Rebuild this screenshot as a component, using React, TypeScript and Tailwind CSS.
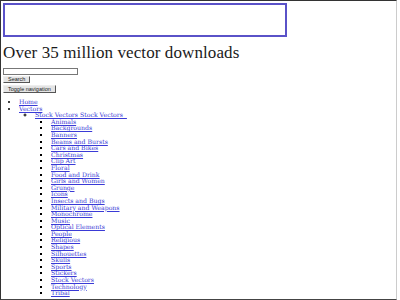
import React from "react";

const cats = [
  "Animals","Backgrounds","Banners","Beams and Bursts","Cars and Bikes","Christmas","Clip Art","Floral","Food and Drink","Girls and Women","Grunge","Icons","Insects and Bugs","Military and Weapons","Monochrome","Music","Optical Elements","People","Religious","Shapes","Silhouettes","Skulls","Sports","Stickers","Stock Vectors","Technology","Tribal",
];

const link = "text-[#3a3ad6] underline";

export default function App() {
  return (
    <div className="w-[400px] h-[300px] overflow-hidden bg-white">
      <div className="w-[397px] h-[300px] border-t border-l border-b border-r border-t-[#333] border-l-[#333] border-b-[#444] border-r-[#ccc] overflow-hidden pl-[2px] pt-[2px]" style={{ fontFamily: '"Liberation Serif", serif' }}>
        <div className="w-[284px] h-[34px] border-2 border-[#5a52c8]"></div>
        <h1 className="mt-[6px] text-[17px] leading-[20px] tracking-[0.1px] text-[#1a1a1a]" style={{ fontFamily: '"Liberation Serif", serif' }}>
          Over 35 million vector downloads
        </h1>
        <div className="mt-[5px] flex flex-col items-start">
          <div className="w-[75px] h-[7px] border border-[#777] bg-white"></div>
          <button className="mt-[1px] h-[7px] px-[4px] bg-[#e4e4e4] border border-t-[#eee] border-l-[#eee] border-b-[#555] border-r-[#555] text-[5.5px] leading-[5px] text-[#222]" style={{ fontFamily: '"Liberation Sans", sans-serif' }}>
            Search
          </button>
          <button className="mt-[2px] h-[8px] px-[4px] bg-[#e4e4e4] border border-t-[#eee] border-l-[#eee] border-b-[#555] border-r-[#555] text-[5.5px] leading-[5px] text-[#222]" style={{ fontFamily: '"Liberation Sans", sans-serif' }}>
            Toggle navigation
          </button>
        </div>
        <ul className="mt-[6px] pl-[16px] list-disc text-[6.2px] leading-[6.6px]" style={{ fontFamily: '"DejaVu Serif", serif' }}>
          <li><a className={link}>Home</a></li>
          <li>
            <a className={link}>Vectors</a>
            <ul className="pl-[16px] list-[circle]">
              <li>
                <a className={link}>Stock Vectors Stock Vectors&nbsp;&nbsp;</a>
                <ul className="pl-[16px] list-[square]">
                  {cats.map((c) => (
                    <li key={c}><a className={link}>{c}</a></li>
                  ))}
                </ul>
              </li>
            </ul>
          </li>
        </ul>
      </div>
    </div>
  );
}
